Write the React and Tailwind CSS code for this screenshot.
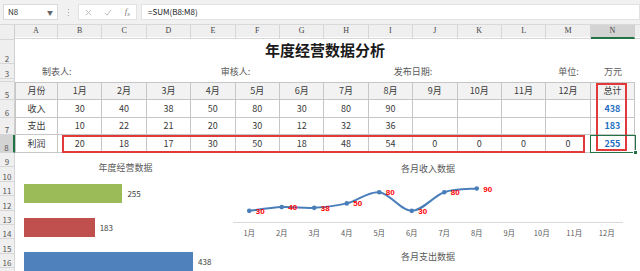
import React from "react";

const COLS = ["A", "B", "C", "D", "E", "F", "G", "H", "I", "J", "K", "L", "M", "N"];
const MONTHS = ["1月", "2月", "3月", "4月", "5月", "6月", "7月", "8月", "9月", "10月", "11月", "12月"];
const income = [30, 40, 38, 50, 80, 30, 80, 90];
const expense = [10, 22, 21, 20, 30, 12, 32, 36];
const profit = [20, 18, 17, 30, 50, 18, 48, 54, 0, 0, 0, 0];

const sheetCols = "grid grid-cols-[15px_43px_repeat(13,44.4px)_1fr]";
const cjk = { fontFamily: '"Noto Sans CJK SC", "Noto Sans", sans-serif' };

const RowHead = ({ n, active }) => (
  <div
    className={`flex items-end justify-center border-b border-[#d6d6d6] text-[8px] leading-[10px] text-[#555] ${
      active ? "bg-[#d3d3d3] border-r-2 border-r-[#217346]" : "bg-[#efefef] border-r border-r-[#cfcfcf]"
    }`}
  >
    <span className="translate-y-[1px]">{n}</span>
  </div>
);

const Cell = ({ children, className = "" }) => (
  <div className={`flex items-center justify-center border-r border-b border-[#c6c6c6] ${className}`}>{children}</div>
);

function smoothPath(pts) {
  let d = `M${pts[0][0]},${pts[0][1]}`;
  for (let i = 0; i < pts.length - 1; i++) {
    const p0 = pts[i - 1] || pts[i];
    const p1 = pts[i];
    const p2 = pts[i + 1];
    const p3 = pts[i + 2] || p2;
    const c1x = p1[0] + (p2[0] - p0[0]) / 6;
    const c1y = p1[1] + (p2[1] - p0[1]) / 6;
    const c2x = p2[0] - (p3[0] - p1[0]) / 6;
    const c2y = p2[1] - (p3[1] - p1[1]) / 6;
    d += ` C${c1x},${c1y} ${c2x},${c2y} ${p2[0]},${p2[1]}`;
  }
  return d;
}

const Toolbar = () => (
  <div className="flex h-[25px] items-center gap-[4px] border-b border-[#d9d9d9] bg-[#f1f1f1] pl-[3px]">
    <div className="flex h-[16px] w-[55px] items-center justify-between border border-[#dadada] bg-white px-[4px] text-[8px] text-[#333]">
      <span>N8</span>
      <span className="text-[6px] text-[#666]">▼</span>
    </div>
    <div className="flex w-[12px] flex-col items-center gap-[2px]">
      <span className="h-[1px] w-[1px] bg-[#aaa]" />
      <span className="h-[1px] w-[1px] bg-[#aaa]" />
      <span className="h-[1px] w-[1px] bg-[#aaa]" />
    </div>
    <div className="flex h-[16px] w-[59px] items-center justify-around border border-[#e2e2e2] bg-white text-[#b5b5b5]">
      <svg width="7" height="7" viewBox="0 0 8 8" stroke="currentColor" strokeWidth="1">
        <path d="M1 1L7 7M7 1L1 7" />
      </svg>
      <svg width="8" height="7" viewBox="0 0 9 8" stroke="currentColor" strokeWidth="1" fill="none">
        <path d="M1 4.5L3.5 7L8 1" />
      </svg>
      <span className="font-['Liberation_Serif'] text-[9px] italic text-[#777]">
        f<sub className="text-[6px]">x</sub>
      </span>
    </div>
    <div className="flex h-[16px] flex-1 items-center border border-[#e2e2e2] bg-white pl-[6px] text-[8px] text-[#222]">
      =SUM(B8:M8)
    </div>
  </div>
);

const ColumnHeader = () => (
  <div className={`${sheetCols} h-[12px] bg-[#efefef] font-['Liberation_Serif'] text-[8px] leading-[12px] text-[#444]`}>
    <div className="border-r border-[#cfcfcf] border-b" />
    {COLS.map((c) => (
      <div
        key={c}
        className={`flex justify-center ${
          c === "N" ? "bg-[#d3d3d3] border-b-2 border-b-[#217346] border-r border-r-[#cfcfcf]" : "border-r border-b border-[#d6d6d6]"
        }`}
      >
        {c}
      </div>
    ))}
    <div className="border-b border-[#d6d6d6]" />
  </div>
);

const BarChart = () => {
  const bars = [
    { v: 255, color: "bg-[#9bbb59]" },
    { v: 183, color: "bg-[#c0504d]" },
    { v: 438, color: "bg-[#4f81bd]" },
  ];
  return (
    <div className="flex w-[218px] flex-col pl-[9px] pt-[9px]">
      <div className="pr-[6px] text-center text-[9px] leading-[12px] text-[#595959]">年度经营数据</div>
      <div className="mt-[10px] flex flex-col gap-[15px]">
        {bars.map((b) => (
          <div key={b.v} className="flex items-center gap-[5px]">
            <div className={`h-[19px] ${b.color}`} style={{ width: b.v * 0.386 }} />
            <span className="text-[8px] text-[#404040]">{b.v}</span>
          </div>
        ))}
      </div>
    </div>
  );
};

const LineChart = () => {
  const pts = income.map((v, i) => [16.25 + i * 32.5, 47 - v * 0.372]);
  return (
    <div className="flex w-[390px] flex-col pt-[10px]">
      <div className="text-center text-[9px] leading-[12px] text-[#595959]">各月收入数据</div>
      <svg width="390" height="49" className="block">
        <line x1="0" y1="47.5" x2="390" y2="47.5" stroke="#d9d9d9" strokeWidth="1" />
        <path d={smoothPath(pts)} fill="none" stroke="#4a7ebb" strokeWidth="2" />
        {pts.map(([x, y], i) => (
          <g key={i}>
            <circle cx={x} cy={y} r="2.3" fill="#4a7ebb" />
            <text
              x={x + 6.5}
              y={y + 3}
              fontSize="8"
              fontWeight="bold"
              fill="#ff0000"
              fontFamily="Liberation Sans, sans-serif"
            >
              {income[i]}
            </text>
          </g>
        ))}
      </svg>
      <div className="mt-[3px] grid grid-cols-12 text-center text-[7.5px] leading-[12px] text-[#595959]">
        {MONTHS.map((m) => (
          <span key={m}>{m}</span>
        ))}
      </div>
      <div className="mt-[12px] text-center text-[9px] leading-[12px] text-[#595959]">各月支出数据</div>
    </div>
  );
};

export default function App() {
  return (
    <div className="h-[271px] w-[640px] overflow-hidden bg-white" style={cjk}>
      <Toolbar />
      <ColumnHeader />

      {/* row 1 */}
      <div className={`${sheetCols} h-[3px]`}>
        <RowHead n="" />
      </div>

      {/* row 2: title */}
      <div className={`${sheetCols} h-[24px]`}>
        <RowHead n="2" />
        <div className="col-span-14 flex items-start justify-center pt-[1px] text-[15px] font-bold leading-[18px] text-[#1a1a1a]">
          年度经营数据分析
        </div>
      </div>

      {/* row 3 */}
      <div className={`${sheetCols} h-[15px] text-[9px] leading-[13px] text-[#595959]`}>
        <RowHead n="3" />
        <div className="col-span-2 flex items-center justify-center pr-[4px]">制表人:</div>
        <div className="col-span-2" />
        <div className="col-span-2 flex items-center justify-center">审核人:</div>
        <div className="col-span-2" />
        <div className="col-span-2 flex items-center justify-center">发布日期:</div>
        <div className="col-span-2" />
        <div className="flex items-center justify-center">单位:</div>
        <div className="flex items-center justify-center">万元</div>
      </div>

      {/* row 4 */}
      <div className={`${sheetCols} h-[3px]`}>
        <RowHead n="" />
      </div>

      {/* table rows 5-8 */}
      <div className="relative text-[9px] text-[#3a3a3a]">
        <div className={`${sheetCols} h-[18px]`}>
          <RowHead n="5" />
          <Cell className="border-t border-l bg-[#f2f2f2]">月份</Cell>
          {MONTHS.map((m) => (
            <Cell key={m} className="border-t bg-[#f2f2f2]">
              {m}
            </Cell>
          ))}
          <Cell className="border-t bg-[#f2f2f2]">总计</Cell>
        </div>
        <div className={`${sheetCols} h-[18px]`}>
          <RowHead n="6" />
          <Cell className="border-l">收入</Cell>
          {MONTHS.map((m, i) => (
            <Cell key={m}>{income[i]}</Cell>
          ))}
          <Cell className="font-bold text-[#1f6fbf]">438</Cell>
        </div>
        <div className={`${sheetCols} h-[17px]`}>
          <RowHead n="7" />
          <Cell className="border-l">支出</Cell>
          {MONTHS.map((m, i) => (
            <Cell key={m}>{expense[i]}</Cell>
          ))}
          <Cell className="font-bold text-[#1f6fbf]">183</Cell>
        </div>
        <div className={`${sheetCols} h-[18px]`}>
          <RowHead n="8" active />
          <Cell className="border-l">利润</Cell>
          {MONTHS.map((m, i) => (
            <Cell key={m}>{profit[i]}</Cell>
          ))}
          <Cell className="font-bold text-[#1f6fbf]">255</Cell>
        </div>

        {/* annotations */}
        <div className="pointer-events-none absolute left-[62px] top-[53px] h-[18px] w-[523px] border-2 border-[#e03a3a]" />
        <div className="pointer-events-none absolute left-[596px] top-[1px] h-[68px] w-[31px] border-2 border-[#e03a3a]" />
        <div className="pointer-events-none absolute left-[590px] top-[53px] h-[18px] w-[46px] border border-[#217346]">
          <span className="absolute -bottom-[3px] -right-[3px] h-[5px] w-[5px] border border-white bg-[#217346]" />
        </div>
      </div>

      {/* rows 9+ with floating charts */}
      <div className="flex">
        <div className="flex w-[15px] flex-col">
          {[9, 10, 11, 12, 13, 14, 15, 16, ""].map((n, i) => (
            <div key={i} className="flex h-[14.4px]">
              <RowHeadInline n={n} />
            </div>
          ))}
        </div>
        <div className="flex flex-1">
          <BarChart />
          <LineChart />
        </div>
      </div>
    </div>
  );
}

function RowHeadInline({ n }) {
  return (
    <div className="flex w-full items-end justify-center border-b border-r border-[#d6d6d6] bg-[#efefef] text-[8px] leading-[10px] text-[#555]">
      <span className="translate-y-[1px]">{n}</span>
    </div>
  );
}
